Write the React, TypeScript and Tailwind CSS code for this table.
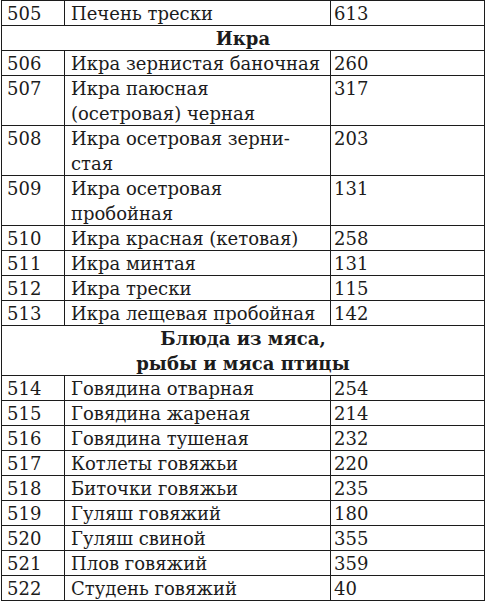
import React from "react"

type Row =
  | { kind: "item"; num: string; name: string[]; kcal: string }
  | { kind: "head"; lines: string[] }

const ROWS: Row[] = [
  { kind: "item", num: "505", name: ["Печень трески"], kcal: "613" },
  { kind: "head", lines: ["Икра"] },
  { kind: "item", num: "506", name: ["Икра зернистая баночная"], kcal: "260" },
  { kind: "item", num: "507", name: ["Икра паюсная", "(осетровая) черная"], kcal: "317" },
  { kind: "item", num: "508", name: ["Икра осетровая зерни-", "стая"], kcal: "203" },
  { kind: "item", num: "509", name: ["Икра осетровая", "пробойная"], kcal: "131" },
  { kind: "item", num: "510", name: ["Икра красная (кетовая)"], kcal: "258" },
  { kind: "item", num: "511", name: ["Икра минтая"], kcal: "131" },
  { kind: "item", num: "512", name: ["Икра трески"], kcal: "115" },
  { kind: "item", num: "513", name: ["Икра лещевая пробойная"], kcal: "142" },
  { kind: "head", lines: ["Блюда из мяса,", "рыбы и мяса птицы"] },
  { kind: "item", num: "514", name: ["Говядина отварная"], kcal: "254" },
  { kind: "item", num: "515", name: ["Говядина жареная"], kcal: "214" },
  { kind: "item", num: "516", name: ["Говядина тушеная"], kcal: "232" },
  { kind: "item", num: "517", name: ["Котлеты говяжьи"], kcal: "220" },
  { kind: "item", num: "518", name: ["Биточки говяжьи"], kcal: "235" },
  { kind: "item", num: "519", name: ["Гуляш говяжий"], kcal: "180" },
  { kind: "item", num: "520", name: ["Гуляш свиной"], kcal: "355" },
  { kind: "item", num: "521", name: ["Плов говяжий"], kcal: "359" },
  { kind: "item", num: "522", name: ["Студень говяжий"], kcal: "40" },
]

export default function App() {
  return (
    <div className="w-[486px] h-[601px] bg-white overflow-hidden">
      <div
        className="ml-[1px] w-[484px] border-l border-r border-t border-[#1c1c1c] text-[18px] leading-[25px] text-[#1c1c1c]"
        style={{ fontFamily: '"DejaVu Serif", "Liberation Serif", serif' }}
      >
        {ROWS.map((row, i) =>
          row.kind === "head" ? (
            <div
              key={i}
              className="border-b border-[#1c1c1c] text-center font-bold"
              style={{ height: row.lines.length * 25 }}
            >
              {row.lines.map((l) => (
                <div key={l}>{l}</div>
              ))}
            </div>
          ) : (
            <div
              key={i}
              className="flex border-b border-[#1c1c1c]"
              style={{ height: row.name.length * 25 }}
            >
              <div className="w-[63px] shrink-0 border-r border-[#1c1c1c] pl-[5px]">{row.num}</div>
              <div className="w-[266px] shrink-0 border-r border-[#1c1c1c] pl-[6px] whitespace-nowrap">
                {row.name.map((n) => (
                  <div key={n}>{n}</div>
                ))}
              </div>
              <div className="flex-1 pl-[3px]">{row.kcal}</div>
            </div>
          ),
        )}
      </div>
    </div>
  )
}
